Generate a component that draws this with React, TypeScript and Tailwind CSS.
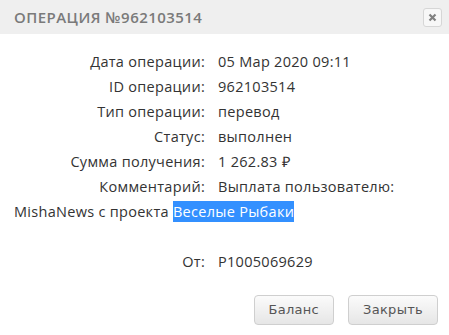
const rows: [string, string][] = [
  ['Дата операции:', '05 Мар 2020 09:11'],
  ['ID операции:', '962103514'],
  ['Тип операции:', 'перевод'],
  ['Статус:', 'выполнен'],
  ['Сумма получения:', '1 262.83 ₽'],
];

const Row = ({ label, children }: { label: string; children: React.ReactNode }) => (
  <div className="flex h-[25px] items-center">
    <div className="w-[205px] shrink-0 text-right">{label}</div>
    <div className="pl-[13px]">{children}</div>
  </div>
);

export default function App() {
  return (
    <div
      className="w-[449px] h-[335px] bg-white text-[14.5px] tracking-[0.02em] text-[#333] overflow-hidden"
      style={{ fontFamily: '"Open Sans", sans-serif' }}
    >
      <div className="flex h-[34px] items-center justify-between bg-[#efefef] pl-[14px] pr-[7px]">
        <div className="text-[15px] font-semibold tracking-[0.03em] text-[#7a7a7a]">
          ОПЕРАЦИЯ №962103514
        </div>
        <div className="flex h-[19px] w-[19px] items-center justify-center rounded-[3px] border border-[#d6d6d6] bg-[#f7f7f7]">
          <svg width="9" height="9" viewBox="0 0 9 9">
            <path d="M1.5 1.5 L7.5 7.5 M7.5 1.5 L1.5 7.5" stroke="#808080" strokeWidth="2.2" />
          </svg>
        </div>
      </div>

      <div className="pt-[15px]">
        {rows.map(([l, v]) => (
          <Row key={l} label={l}>
            {v}
          </Row>
        ))}
        <Row label="Комментарий:">Выплата пользователю:</Row>
        <div className="flex h-[25px] items-center pl-[14px]">
          MishaNews с проекта&nbsp;
          <span className="bg-[#3390ff] text-white">Веселые Рыбаки</span>
        </div>
        <div className="h-[25px]" />
        <Row label="От:">P1005069629</Row>
      </div>

      <div className="mt-[21px] flex justify-end gap-[14px] pr-[11px]">
        {['Баланс', 'Закрыть'].map((b) => (
          <button
            key={b}
            className="h-[30px] rounded-[4px] border border-[#cfcfcf] bg-gradient-to-b from-[#fbfbfb] to-[#e6e6e6] px-[14px] text-[13px] text-[#555]"
            style={{ fontFamily: '"DejaVu Sans", Verdana, sans-serif' }}
          >
            {b}
          </button>
        ))}
      </div>
    </div>
  );
}
